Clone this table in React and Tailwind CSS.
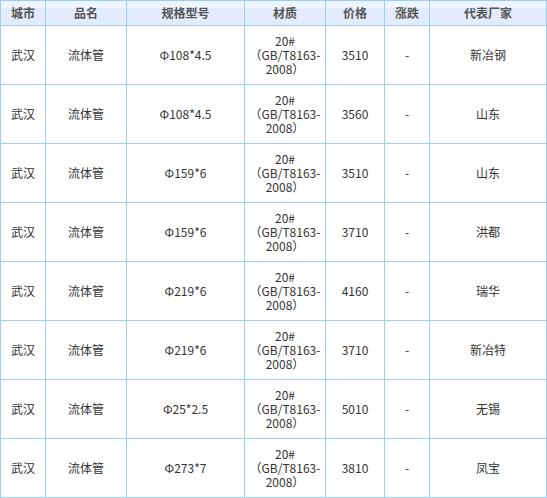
import React from 'react'

const rows = [
  ['Φ108*4.5', '3510', '新冶钢'],
  ['Φ108*4.5', '3560', '山东'],
  ['Φ159*6', '3510', '山东'],
  ['Φ159*6', '3710', '洪都'],
  ['Φ219*6', '4160', '瑞华'],
  ['Φ219*6', '3710', '新冶特'],
  ['Φ25*2.5', '5010', '无锡'],
  ['Φ273*7', '3810', '凤宝'],
]

const heads = ['城市', '品名', '规格型号', '材质', '价格', '涨跌', '代表厂家']

function Cell({ children }){
  return <div className="bg-white flex items-center justify-center text-center text-[12px] leading-[14px] text-[#333]">{children}</div>
}

export default function App(){
  return (
    <div
      className="w-[547px] h-[498px] grid grid-cols-[44px_80px_117px_80px_58px_44px_116px] grid-rows-[24px_repeat(8,58px)] gap-px p-px bg-[#9cf]"
      style={{ fontFamily: '"Noto Sans CJK SC", "Noto Sans", sans-serif' }}
    >
      {heads.map(h => (
        <div key={h} className="flex items-center justify-center text-[12px] font-bold text-[#555] bg-[linear-gradient(#eff5fe_0,#eff5fe_30%,#e2ecfc_30%,#e2ecfc_100%)]">
          {h}
        </div>
      ))}
      {rows.map((r, i) => (
        <React.Fragment key={i}>
          <Cell>武汉</Cell>
          <Cell>流体管</Cell>
          <Cell>{r[0]}</Cell>
          <Cell>
            <div className="leading-[14px]">20#<br />（GB/T8163-<br />2008）</div>
          </Cell>
          <Cell>{r[1]}</Cell>
          <Cell>-</Cell>
          <Cell>{r[2]}</Cell>
        </React.Fragment>
      ))}
    </div>
  )
}
